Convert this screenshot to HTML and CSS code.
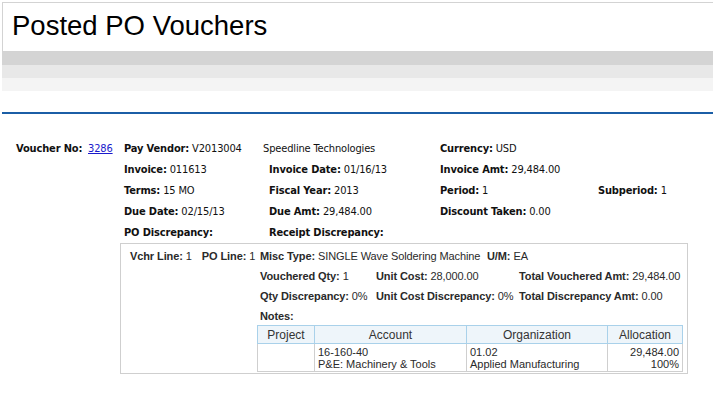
FILE: index.html
```html
<!DOCTYPE html>
<html lang="en">
  <head>
    <meta charset="UTF-8" />
    <title>Posted PO Vouchers</title>
    <link rel="stylesheet" href="styles.css">
  </head>
  <body>
    <div class="page">
      <div class="title-box">
        <h1>Posted PO Vouchers</h1>
      </div>
      <div class="band band-1"></div>
      <div class="band band-2"></div>
      <div class="band band-3"></div>
      <div class="rule"></div>

      <!-- voucher header -->
      <div class="voucher">
        <div class="cell"><b>Voucher No:</b></div>
        <div class="cell"><a href="#">3286</a></div>
        <div class="cell"><b>Pay Vendor:</b> V2013004</div>
        <div class="cell vendor-name">Speedline Technologies</div>
        <div class="cell"><b>Currency:</b> USD</div>
        <div class="cell"></div>

        <div class="cell"></div>
        <div class="cell"></div>
        <div class="cell"><b>Invoice:</b> 011613</div>
        <div class="cell"><b>Invoice Date:</b> 01/16/13</div>
        <div class="cell"><b>Invoice Amt:</b> 29,484.00</div>
        <div class="cell"></div>

        <div class="cell"></div>
        <div class="cell"></div>
        <div class="cell"><b>Terms:</b> 15 MO</div>
        <div class="cell"><b>Fiscal Year:</b> 2013</div>
        <div class="cell"><b>Period:</b> 1</div>
        <div class="cell"><b>Subperiod:</b> 1</div>

        <div class="cell"></div>
        <div class="cell"></div>
        <div class="cell"><b>Due Date:</b> 02/15/13</div>
        <div class="cell"><b>Due Amt:</b> 29,484.00</div>
        <div class="cell"><b>Discount Taken:</b> 0.00</div>
        <div class="cell"></div>

        <div class="cell"></div>
        <div class="cell"></div>
        <div class="cell"><b>PO Discrepancy:</b></div>
        <div class="cell"><b>Receipt Discrepancy:</b></div>
        <div class="cell"></div>
        <div class="cell"></div>
      </div>

      <!-- voucher line -->
      <div class="line-box">
        <div class="line-ids">
          <span><b>Vchr Line:</b> 1</span>
          <span><b>PO Line:</b> 1</span>
        </div>
        <div class="line-body">
          <div class="line-row misc-row">
            <span class="misc"><b>Misc Type:</b> SINGLE Wave Soldering Machine</span>
            <span><b>U/M:</b> EA</span>
          </div>
          <div class="line-row">
            <span><b>Vouchered Qty:</b> 1</span>
            <span><b>Unit Cost:</b> 28,000.00</span>
            <span><b>Total Vouchered Amt:</b> 29,484.00</span>
          </div>
          <div class="line-row">
            <span><b>Qty Discrepancy:</b> 0%</span>
            <span><b>Unit Cost Discrepancy:</b> 0%</span>
            <span><b>Total Discrepancy Amt:</b> 0.00</span>
          </div>
          <div class="line-row notes-row">
            <span><b>Notes:</b></span>
          </div>
          <table class="alloc">
            <thead>
              <tr>
                <th class="col-project">Project</th>
                <th class="col-account">Account</th>
                <th class="col-org">Organization</th>
                <th>Allocation</th>
              </tr>
            </thead>
            <tbody>
              <tr>
                <td></td>
                <td>16-160-40<br>P&amp;E: Machinery &amp; Tools</td>
                <td>01.02<br>Applied Manufacturing</td>
                <td class="num">29,484.00<br>100%</td>
              </tr>
            </tbody>
          </table>
        </div>
      </div>
    </div>
  </body>
</html>
```

FILE: styles.css
```css
body {
  margin: 0;
  font-family: "Liberation Sans", Arial, sans-serif;
  color: #000;
  background: #fff;
}

.page {
  padding: 2px 0 0 2px;
}

.title-box {
  height: 48px;
  border: 1px solid #d3d3d3;
  border-right: none;
}
.title-box h1 {
  margin: 0;
  padding: 8px 0 0 9px;
  font-size: 27.5px;
  font-weight: normal;
  line-height: 30px;
  color: #000;
}

.band {
  height: 13px;
}
.band-1 {
  background: #d4d4d4;
}
.band-2 {
  background: #e8e8e8;
}
.band-3 {
  background: #f4f4f4;
}

.rule {
  margin-top: 21px;
  border-top: 2px solid #1b5ea6;
}

/* header grid */
.voucher {
  display: grid;
  grid-template-columns: 72px 36px 145px 171px 158px auto;
  grid-auto-rows: 21px;
  margin: 24px 0 0 14px;
  font-family: "DejaVu Sans Condensed", "DejaVu Sans", sans-serif;
  font-size: 11px;
  letter-spacing: -0.15px;
  color: #111;
}
.cell {
  line-height: 21px;
  white-space: nowrap;
}
.cell a {
  color: #1a1acc;
}
.vendor-name {
  margin-left: -6px;
}

/* line box */
.line-box {
  display: flex;
  width: 562px;
  margin: 0 0 0 118px;
  padding: 2px 4px 1px 0;
  border: 1px solid #cfcfcf;
  font-size: 11px;
  letter-spacing: -0.1px;
  color: #2a2a2a;
}
.line-ids {
  display: flex;
  flex-shrink: 0;
  gap: 10px;
  width: 127px;
  padding-left: 9px;
  height: 20px;
  line-height: 20px;
  white-space: nowrap;
}
.line-body {
  flex: 1;
  min-width: 0;
}
.line-row {
  display: grid;
  grid-template-columns: 116px 143px auto;
  height: 20px;
  line-height: 20px;
  padding-left: 3px;
  white-space: nowrap;
}
.misc-row {
  grid-template-columns: 227px auto;
}
.notes-row {
  height: 19px;
}

.alloc {
  border-collapse: collapse;
  width: 426px;
  letter-spacing: 0;
}
.alloc th,
.alloc td {
  border: 1px solid #a9d1ea;
  font-size: 11px;
  line-height: 12px;
  vertical-align: top;
}
.alloc th {
  height: 17px;
  padding: 0 3px;
  font-weight: normal;
  background: #eef5fa;
  text-align: center;
  color: #333;
  vertical-align: middle;
  font-size: 12px;
}
.alloc td {
  padding: 2px 3px 1px;
  border-color: #cfcfcf;
  border-top-color: #a9d1ea;
}
.col-project {
  width: 50px;
}
.col-account {
  width: 145px;
}
.col-org {
  width: 134px;
}
.num {
  text-align: right;
}
```
